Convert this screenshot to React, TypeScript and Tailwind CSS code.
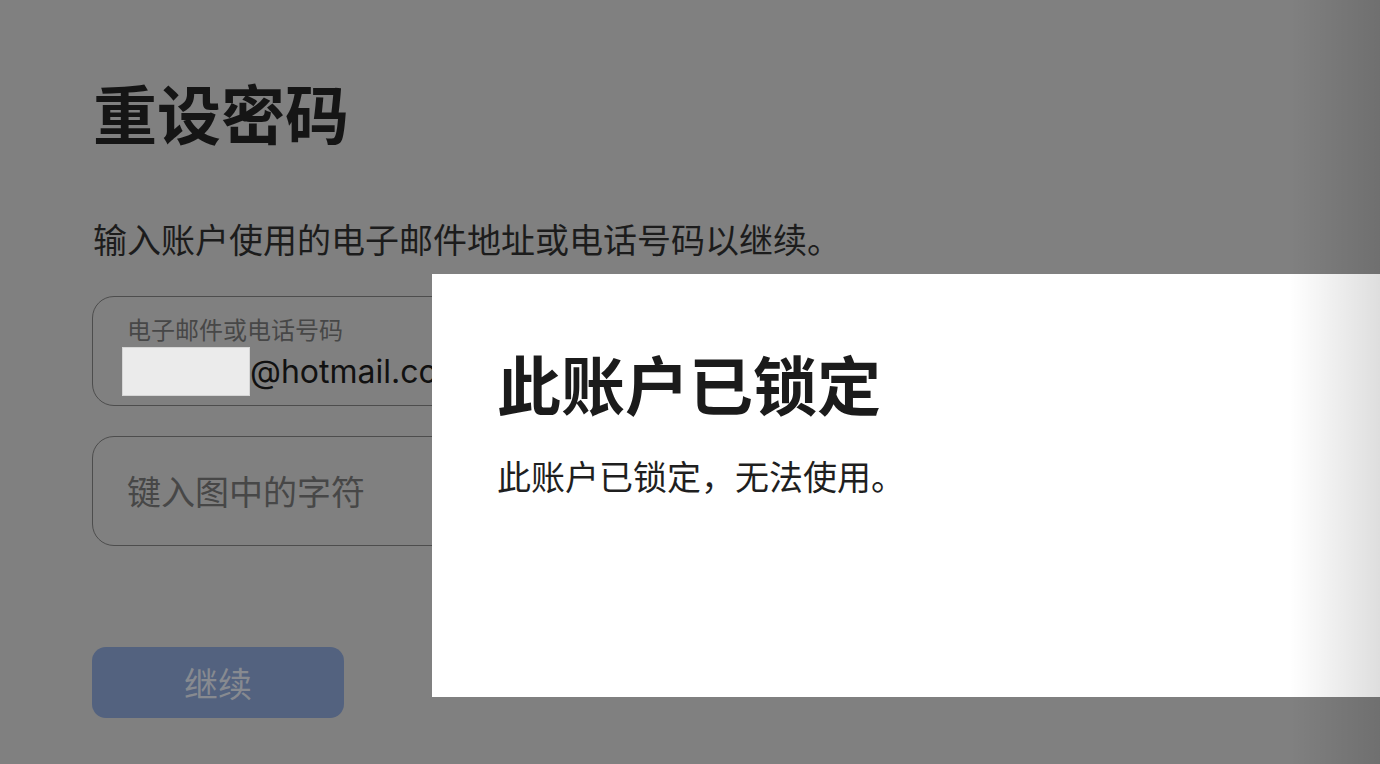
const cjk = { fontFamily: '"Noto Sans CJK SC", "Noto Sans", sans-serif' };

export default function App() {
  return (
    <div className="relative h-[764px] w-[1380px] overflow-hidden bg-[#808080]" style={cjk}>
      {/* page behind the dialog */}
      <div className="flex flex-col items-start pl-[93px] pt-[79px]">
        <h1 className="text-[64px] font-bold leading-none text-[#151515]">重设密码</h1>
        <p className="mt-[79px] text-[34px] leading-none text-[#1c1c1c]">
          输入账户使用的电子邮件地址或电话号码以继续。
        </p>

        <div className="mt-[40px] ml-[-1px] flex h-[110px] w-[820px] flex-col rounded-[22px] border-[1.5px] border-[#4d4d4d] pl-[34px] pt-[20px]">
          <span className="text-[24px] leading-none text-[#474747]">电子邮件或电话号码</span>
          <div className="mt-[6px] ml-[-5px] flex items-center">
            <div className="h-[49px] w-[128px] border border-[#d6d6d6] bg-[#ebebeb]" />
            <span
              className="text-[32px] leading-none text-[#111111]"
              style={{ fontFamily: 'Inter, "Noto Sans", sans-serif' }}
            >
              @hotmail.com
            </span>
          </div>
        </div>

        <div className="mt-[30px] ml-[-1px] flex h-[110px] w-[820px] items-center rounded-[22px] border-[1.5px] border-[#4d4d4d] pl-[34px]">
          <span className="text-[34px] leading-none text-[#474747]">键入图中的字符</span>
        </div>

        <button className="mt-[101px] ml-[-1px] flex h-[71px] w-[252px] items-center justify-center rounded-[14px] bg-[#53627f] text-[34px] leading-none text-[#878a90]">
          继续
        </button>
      </div>

      {/* locked dialog */}
      <div className="absolute left-[432px] top-[274px] h-[423px] w-[948px] bg-white pl-[65px] pt-[76px]">
        <h2 className="text-[64px] font-bold leading-none text-[#1b1b1b]">此账户已锁定</h2>
        <p className="mt-[45px] text-[34px] leading-none text-[#1f1f1f]">此账户已锁定，无法使用。</p>
      </div>

      {/* edge shade */}
      <div className="pointer-events-none absolute right-0 top-0 h-full w-[90px] bg-gradient-to-r from-transparent to-black/[0.13]" />
    </div>
  );
}
